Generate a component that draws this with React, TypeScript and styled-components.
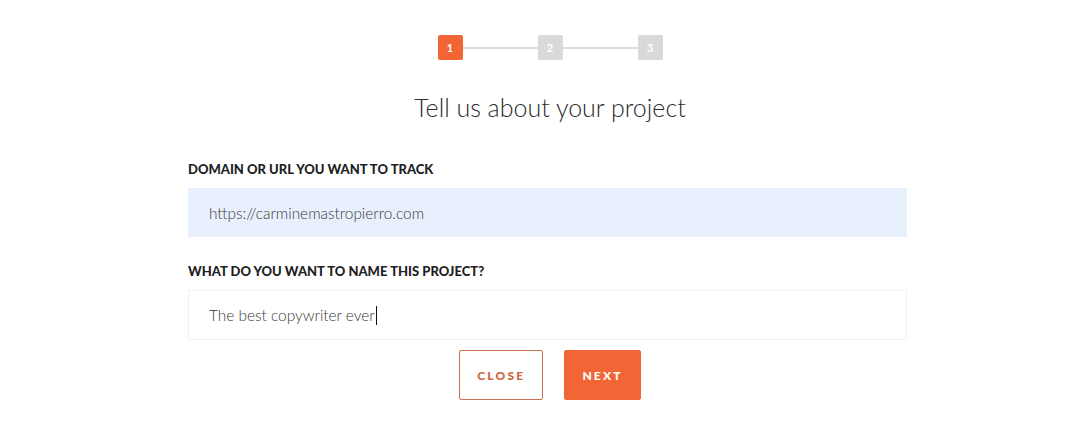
import React from 'react';
import styled, { createGlobalStyle } from 'styled-components';

const GlobalStyle = createGlobalStyle`
  html, body {
    margin: 0;
    padding: 0;
    background: #ffffff;
    font-family: Lato, 'Open Sans', sans-serif;
  }
`;

const ORANGE = '#f26636';

const Page = styled.div`
  display: flex;
  flex-direction: column;
  align-items: center;
  padding: 35px 0 0 10px;
`;

const Stepper = styled.div`
  display: flex;
  align-items: center;
`;

const Step = styled.div<{ $active?: boolean }>`
  width: 25px;
  height: 25px;
  border-radius: 2px;
  background: ${(p) => (p.$active ? ORANGE : '#d9d9d9')};
  color: #ffffff;
  font-size: 11px;
  font-weight: 700;
  display: flex;
  align-items: center;
  justify-content: center;
`;

const Connector = styled.div`
  width: 75px;
  height: 2px;
  background: #dedede;
`;

const Title = styled.h1`
  margin: 29px 0 0;
  font-size: 25px;
  font-weight: 300;
  color: #2b2b2b;
  line-height: 36px;
`;

const Form = styled.div`
  width: 719px;
  margin: 36px 5px 0 0;
  display: flex;
  flex-direction: column;
`;

const Label = styled.label`
  font-size: 13px;
  font-weight: 900;
  color: #1f1f1f;
  line-height: 16px;
  margin-bottom: 11px;
`;

const Input = styled.div<{ $filled?: boolean }>`
  height: ${(p) => (p.$filled ? '49px' : '50px')};
  box-sizing: border-box;
  padding: 0 20px;
  display: flex;
  align-items: center;
  font-size: 15.4px;
  font-weight: 300;
  color: #3a3a3a;
  background: ${(p) => (p.$filled ? '#e8f0fd' : '#ffffff')};
  border: 1px solid ${(p) => (p.$filled ? '#e8f0fd' : '#f2f2f2')};
  margin-bottom: 26px;
`;

const Caret = styled.span`
  display: inline-block;
  width: 1px;
  height: 19px;
  background: #111;
  margin-left: 1px;
`;

const Actions = styled.div`
  display: flex;
  gap: 21px;
  margin-top: -16px;
`;

const Button = styled.button<{ $primary?: boolean }>`
  height: 50px;
  padding: 0 17px;
  border-radius: 2px;
  font-family: Lato, sans-serif;
  font-size: 12px;
  font-weight: 900;
  letter-spacing: 2.2px;
  cursor: pointer;
  border: 1px solid ${(p) => (p.$primary ? ORANGE : '#c87155')};
  background: ${(p) => (p.$primary ? ORANGE : '#ffffff')};
  color: ${(p) => (p.$primary ? '#ffffff' : '#d0653f')};
`;

const App: React.FC = () => {
  return (
    <Page>
      <GlobalStyle />
      <Stepper>
        <Step $active>1</Step>
        <Connector />
        <Step>2</Step>
        <Connector />
        <Step>3</Step>
      </Stepper>
      <Title>Tell us about your project</Title>
      <Form>
        <Label>DOMAIN OR URL YOU WANT TO TRACK</Label>
        <Input $filled>https://carminemastropierro.com</Input>
        <Label>WHAT DO YOU WANT TO NAME THIS PROJECT?</Label>
        <Input>
          The best copywriter ever
          <Caret />
        </Input>
      </Form>
      <Actions>
        <Button>CLOSE</Button>
        <Button $primary>NEXT</Button>
      </Actions>
    </Page>
  );
};

export default App;
